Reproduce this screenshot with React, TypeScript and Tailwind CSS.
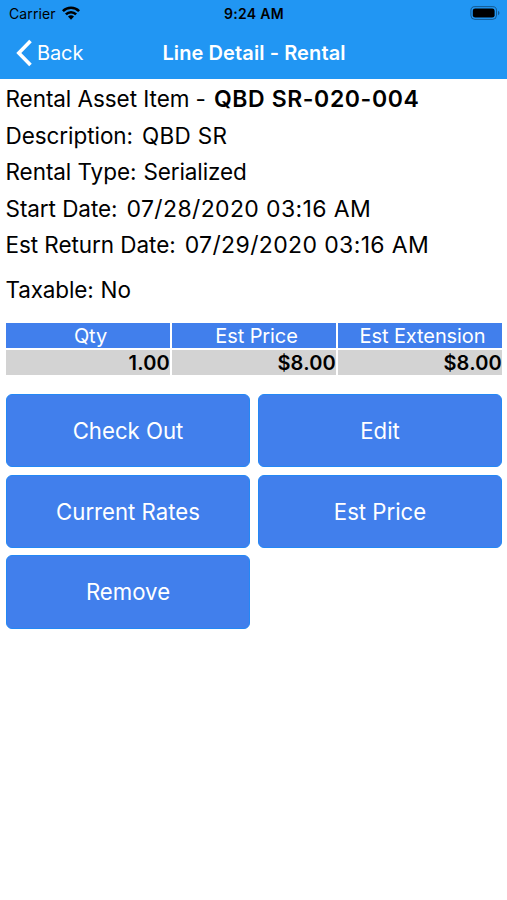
import React from "react";

const rows = [
  { label: "Rental Asset Item -", value: "QBD SR-020-004", style: "ml-[8px] text-[23px] font-semibold tracking-[0.6px]" },
  { label: "Description:", value: "QBD SR", style: "ml-[9px] tracking-[0.3px]" },
  { label: "Rental Type:", value: "Serialized", style: "ml-[7px] tracking-[-0.1px]" },
  { label: "Start Date:", value: "07/28/2020 03:16 AM", style: "ml-[9px] text-[23px] tracking-[0.37px]" },
  { label: "Est Return Date:", value: "07/29/2020 03:16 AM", style: "ml-[9px] text-[23px] tracking-[0.37px]" },
];

const columns = [
  { name: "Qty", value: "1.00" },
  { name: "Est Price", value: "$8.00" },
  { name: "Est Extension", value: "$8.00" },
];

const actions = ["Check Out", "Edit", "Current Rates", "Est Price", "Remove"];

export default function App() {
  return (
    <div className="h-[900px] w-[507px] overflow-hidden bg-white font-['Inter',sans-serif] text-black">
      <header className="h-[79px] bg-[#2196f3]">
        <div className="grid h-[27px] grid-cols-3 items-center pr-[7px] pl-[9px] text-[14px]">
          <div className="flex items-center gap-[6px]">
            <span className="text-[14px] tracking-[0.1px]">Carrier</span>
            <svg className="mb-[2px]" width="18" height="14" viewBox="0 0 18 14" fill="none" stroke="black" strokeWidth="2.6">
              <path d="M0.9 5.1a11.5 11.5 0 0 1 16.2 0M3.9 8.3a7.2 7.2 0 0 1 10.2 0" />
              <path d="M6 10.6a4.3 4.3 0 0 1 6 0L9 13.8z" fill="black" stroke="none" />
            </svg>
          </div>
          <span className="pr-px text-center font-semibold tracking-[0.3px]">9:24 AM</span>
          <svg className="mb-px justify-self-end" width="30" height="14" viewBox="0 0 30 14">
            <rect x="0.9" y="0.6" width="25.6" height="12.8" rx="4" fill="none" stroke="black" strokeOpacity=".4" />
            <rect x="2.8" y="2.4" width="21.8" height="9.2" rx="2.4" />
            <path d="M28 4.8c2 .8 2 3.6 0 4.4z" fillOpacity=".4" />
          </svg>
        </div>
        <div className="grid h-[51px] grid-cols-[140px_1fr_140px] items-center text-white">
          <div className="flex items-center gap-[5px] pl-[16px] text-[20px] tracking-[-0.1px]">
            <svg width="16" height="28" viewBox="0 0 16 28" fill="none" stroke="white" strokeWidth="3.6">
              <path d="M14.5 2 2.8 14 14.5 26" />
            </svg>
            Back
          </div>
          <h1 className="pl-px text-center text-[20px] font-semibold tracking-[0.1px]">Line Detail - Rental</h1>
        </div>
      </header>
      <main className="pt-[2px] pr-[5px] pl-[6px]">
        {rows.map((row) => (
          <div key={row.label} className="flex h-[36.6px] items-baseline whitespace-nowrap text-[22.5px] leading-[36.6px]">
            <span className="-ml-[0.5px] tracking-[-0.06px]">{row.label}</span>
            <span className={row.style}>{row.value}</span>
          </div>
        ))}
        <div className="mt-[7px] flex h-[37px] items-center text-[22.5px]">
          <span className="-ml-[0.5px] tracking-[-0.15px]">Taxable:</span>
          <span className="ml-[7px]">No</span>
        </div>
        <div className="mt-[15px] grid grid-cols-3 gap-x-[2px]">
          {columns.map((col) => (
            <div key={col.name} className="flex flex-col gap-[2px] text-[20px] leading-[27px]">
              <div className="h-[25px] bg-[#417fec] pl-[5px] text-center tracking-[-0.1px] text-white">{col.name}</div>
              <div className="h-[25px] bg-[#d3d3d3] text-right font-semibold tracking-[0.2px]">{col.value}</div>
            </div>
          ))}
        </div>
        <div className="mt-[19px] grid grid-cols-2 gap-x-[8px] gap-y-[7.4px]">
          {actions.map((label) => (
            <button
              key={label}
              className="h-[73.3px] rounded-[6px] border border-[#2388f5] bg-[#417fec] text-[22.2px] text-white"
            >
              {label}
            </button>
          ))}
        </div>
      </main>
    </div>
  );
}
